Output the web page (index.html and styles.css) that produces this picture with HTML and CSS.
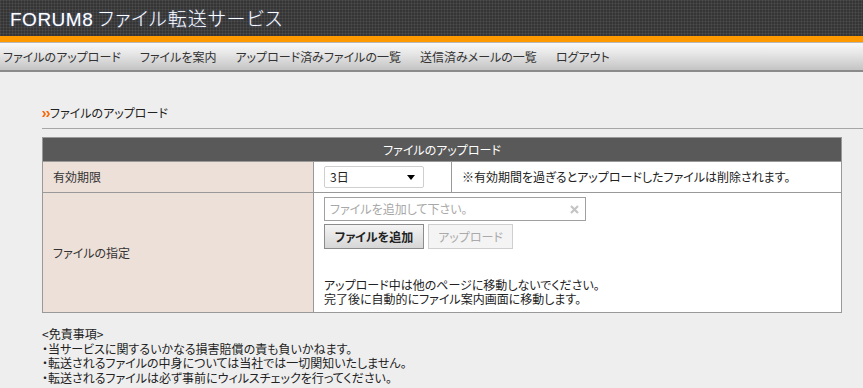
FILE: index.html
```html
<!DOCTYPE html>
<html lang="ja">
<head>
    <meta charset="UTF-8">
    <title>FORUM8 ファイル転送サービス</title>
    <link rel="stylesheet" href="styles.css">
</head>
<body>
    <header class="site-header">
        <h1 class="site-title"><span class="brand">FORUM8</span> <span class="service">ファイル転送サービス</span></h1>
    </header>
    <div class="accent-bar"></div>

    <nav class="main-nav">
        <a href="#">ファイルのアップロード</a>
        <a href="#">ファイルを案内</a>
        <a href="#">アップロード済みファイルの一覧</a>
        <a href="#">送信済みメールの一覧</a>
        <a href="#">ログアウト</a>
    </nav>

    <main class="content">
        <div class="breadcrumb">
            <svg class="crumb-icon" width="8" height="6" viewBox="0 0 8 6">
                <path d="M0 0h2l2 3-2 3H0l2-3zM4 0h2l2 3-2 3H4l2-3z" fill="#f60"/>
            </svg>
            <span>ファイルのアップロード</span>
        </div>

        <table class="upload-table">
            <tr>
                <th colspan="3">ファイルのアップロード</th>
            </tr>
            <tr>
                <td class="label">有効期限</td>
                <td class="select-cell">
                    <div class="fake-select">
                        <span>3日</span>
                        <span class="arrow"></span>
                    </div>
                </td>
                <td class="note">※有効期間を過ぎるとアップロードしたファイルは削除されます。</td>
            </tr>
            <tr>
                <td class="label">ファイルの指定</td>
                <td colspan="2" class="file-cell">
                    <div class="file-box">
                        <span class="placeholder">ファイルを追加して下さい。</span>
                        <svg class="clear" width="9" height="9" viewBox="0 0 9 9">
                            <path d="M1 1l7 7M8 1l-7 7" stroke="#c4c4c4" stroke-width="2.2"/>
                        </svg>
                    </div>
                    <div class="file-actions">
                        <button class="btn btn-add">ファイルを追加</button>
                        <button class="btn btn-upload" disabled>アップロード</button>
                    </div>
                    <p class="file-help">アップロード中は他のページに移動しないでください。<br>完了後に自動的にファイル案内画面に移動します。</p>
                </td>
            </tr>
        </table>

        <div class="disclaimer">
            &lt;免責事項&gt;<br>
            ・当サービスに関するいかなる損害賠償の責も負いかねます。<br>
            ・転送されるファイルの中身については当社では一切関知いたしません。<br>
            ・転送されるファイルは必ず事前にウィルスチェックを行ってください。
        </div>
    </main>
</body>
</html>
```

FILE: styles.css
```css
* {
    margin: 0;
    padding: 0;
    box-sizing: border-box;
}

body {
    font-family: "Noto Sans CJK JP", "Liberation Sans", sans-serif;
    font-size: 12px;
    line-height: 14px;
    font-feature-settings: "palt";
    color: #222;
    background: #eeeeee;
    min-height: 100vh;
}

.site-header {
    height: 36px;
    background-color: #353535;
    background-image:
        linear-gradient(90deg, rgba(255,255,255,0.06) 1px, transparent 1px),
        linear-gradient(rgba(255,255,255,0.06) 1px, transparent 1px);
    background-size: 3px 3px;
    padding-left: 10px;
}

.site-title {
    font-weight: normal;
    font-size: 19px;
    line-height: 36px;
    color: #fff;
    letter-spacing: 0.5px;
    text-shadow: 0 0 2px rgba(120,160,255,0.5);
}

.brand {
    font-family: "Liberation Sans", sans-serif;
}

.service {
    font-weight: 300;
    letter-spacing: 1px;
}

.accent-bar {
    height: 6px;
    background: #ff9900;
}

.main-nav {
    display: flex;
    gap: 19px;
    height: 30px;
    padding-left: 3px;
    background: linear-gradient(#f8f8f8, #e6e6e6 40%, #c4c4c4);
    border-top: 1px solid #b8b8b8;
    border-bottom: 2px solid #8a8a8a;
}

.main-nav a {
    color: #333;
    text-decoration: none;
    line-height: 27px;
}

.content {
    padding-top: 34px;
}

.breadcrumb {
    margin-left: 42px;
    padding-bottom: 8px;
    border-bottom: 1px solid #a6a6a6;
    display: flex;
    align-items: center;
}

.crumb-icon {
    margin-top: 1px;
}

.upload-table {
    margin: 8px 0 0 42px;
    width: 800px;
    border-collapse: collapse;
    background: #fff;
}

.upload-table th,
.upload-table td {
    border: 1px solid #999;
}

.upload-table th {
    background: #595959;
    color: #fff;
    font-weight: normal;
    height: 24px;
}

.upload-table .label {
    width: 271px;
    background: #ede0d8;
    padding: 0 10px;
    color: #333;
}

.select-cell {
    width: 138px;
    padding: 4px 10px;
}

.fake-select {
    width: 100px;
    height: 22px;
    border: 1px solid #cfcfcf;
    border-radius: 2px;
    background: #fff;
    display: flex;
    align-items: center;
    justify-content: space-between;
    padding: 0 8px 0 5px;
}

.arrow {
    width: 0;
    height: 0;
    border-left: 4px solid transparent;
    border-right: 4px solid transparent;
    border-top: 5px solid #000;
}

.note {
    padding: 0 10px;
}

.file-cell {
    height: 120px;
    padding: 4px 10px;
    vertical-align: top;
}

.file-box {
    width: 262px;
    height: 24px;
    border: 1px solid #a0a0a0;
    display: flex;
    align-items: center;
    justify-content: space-between;
    padding: 0 6px 0 5px;
}

.placeholder {
    color: #a8a8a8;
}

.file-actions {
    display: flex;
    gap: 4px;
    margin-top: 3px;
}

.btn {
    font-family: inherit;
    font-size: 12px;
    font-feature-settings: "palt";
    height: 25px;
    border: 1px solid #8c8c8c;
    background: linear-gradient(#f4f4f4, #d6d6d6);
    color: #222;
}

.btn-add {
    width: 100px;
    font-weight: bold;
}

.btn-upload {
    width: 85px;
    border-color: #cfcfcf;
    background: #f4f4f4;
    color: #aaa;
}

.file-help {
    margin-top: 29px;
}

.disclaimer {
    margin: 14px 0 0 42px;
    line-height: 14.5px;
}
```
